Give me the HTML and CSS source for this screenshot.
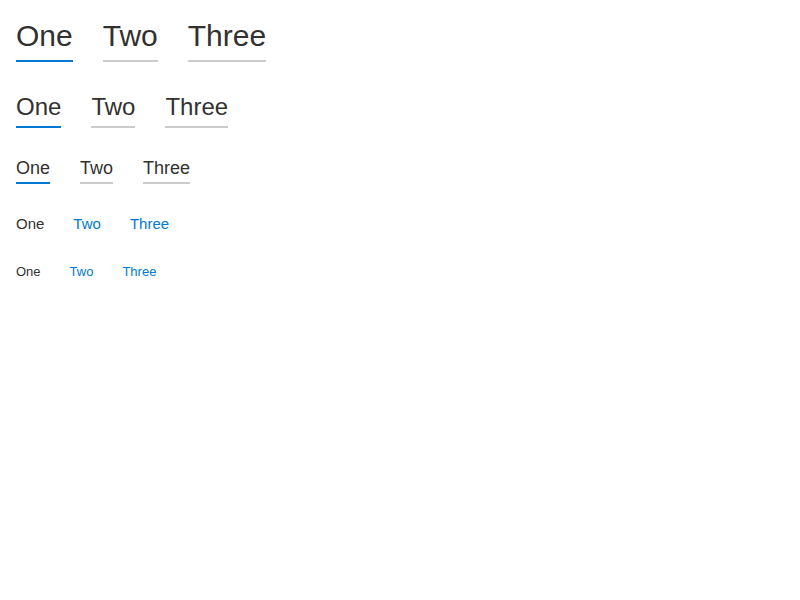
FILE: index.html
```html
<!DOCTYPE html>
<html>
<head>
<meta charset="utf-8">
<link rel="stylesheet" href="styles.css">
</head>
<body>
<div class="page">
  <div class="tabs xl">
    <span class="tab active">One</span>
    <span class="tab">Two</span>
    <span class="tab">Three</span>
  </div>
  <div class="tabs lg">
    <span class="tab active">One</span>
    <span class="tab">Two</span>
    <span class="tab">Three</span>
  </div>
  <div class="tabs md">
    <span class="tab active">One</span>
    <span class="tab">Two</span>
    <span class="tab">Three</span>
  </div>
  <div class="tabs sm links">
    <span class="tab active">One</span>
    <span class="tab">Two</span>
    <span class="tab">Three</span>
  </div>
  <div class="tabs xs links">
    <span class="tab active">One</span>
    <span class="tab">Two</span>
    <span class="tab">Three</span>
  </div>
</div>
</body>
</html>
```

FILE: styles.css
```css
html, body {
  margin: 0;
  padding: 0;
  background: #ffffff;
}
.page {
  padding: 16px;
  display: flex;
  flex-direction: column;
  align-items: flex-start;
  font-family: "Liberation Sans", Arial, sans-serif;
  color: #323130;
}
.tabs {
  display: flex;
  gap: 30px;
}
.tab {
  display: block;
  border-bottom: 2px solid #cccccc;
}
.tab.active {
  border-bottom-color: #0078d4;
}
.xl {
  font-size: 30px;
  line-height: 40px;
}
.xl .tab { padding-bottom: 4px; }
.lg {
  margin-top: 29px;
  font-size: 24px;
  line-height: 32px;
}
.lg .tab { padding-bottom: 3px; }
.md {
  margin-top: 28px;
  font-size: 18px;
  line-height: 24px;
}
.md .tab { padding-bottom: 2px; }
.sm {
  margin-top: 30px;
  font-size: 15px;
  line-height: 20px;
  gap: 29px;
}
.xs {
  margin-top: 30px;
  font-size: 13px;
  line-height: 16px;
  gap: 29px;
}
.links .tab {
  border-bottom: none;
  padding-bottom: 0;
  color: #0078d4;
}
.links .tab.active {
  color: #323130;
}
```
